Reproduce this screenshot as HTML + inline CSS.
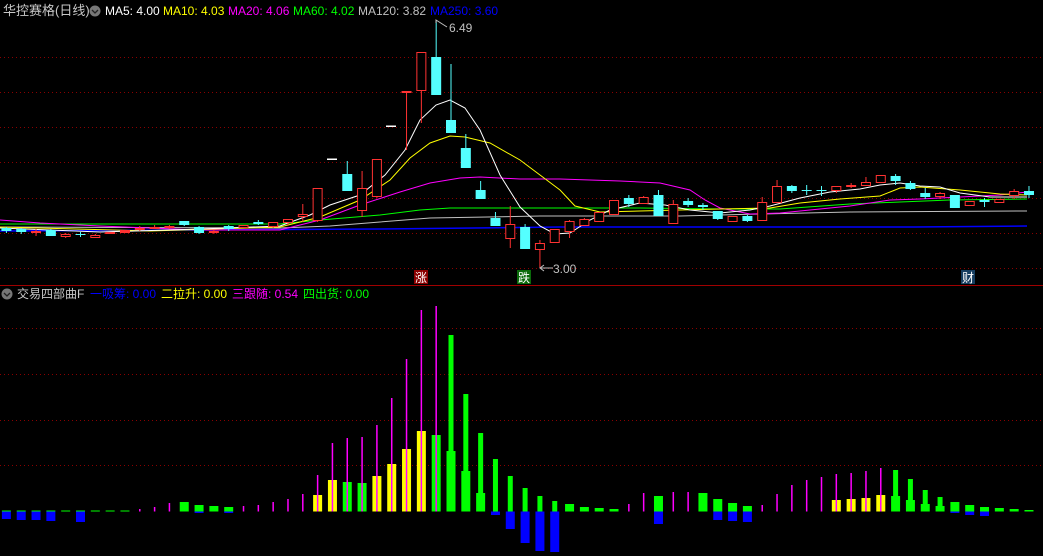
<!DOCTYPE html>
<html><head><meta charset="utf-8"><style>
html,body{margin:0;padding:0;background:#000;width:1043px;height:556px;overflow:hidden;position:relative;font-family:"Liberation Sans","Noto Sans CJK SC",sans-serif;}
.t{position:absolute;font-size:12px;line-height:14px;white-space:nowrap;}
svg{position:absolute;left:0;top:0}
</style></head><body>
<svg width="1043" height="556" viewBox="0 0 1043 556">
<g stroke="#8a0000" stroke-width="1" stroke-dasharray="1,3">
<line x1="0" y1="57.5" x2="1043" y2="57.5"/><line x1="0" y1="92.5" x2="1043" y2="92.5"/><line x1="0" y1="127.5" x2="1043" y2="127.5"/><line x1="0" y1="162.5" x2="1043" y2="162.5"/><line x1="0" y1="198.5" x2="1043" y2="198.5"/><line x1="0" y1="233.5" x2="1043" y2="233.5"/><line x1="0" y1="268.5" x2="1043" y2="268.5"/>
<line x1="0" y1="328.5" x2="1043" y2="328.5"/><line x1="0" y1="374.5" x2="1043" y2="374.5"/><line x1="0" y1="420.5" x2="1043" y2="420.5"/><line x1="0" y1="465.5" x2="1043" y2="465.5"/>
</g>
<line x1="0" y1="285.5" x2="1043" y2="285.5" stroke="#a00000" stroke-width="1"/>
<g fill="none" stroke-width="1">
<polyline stroke="#0000ff" stroke-width="1.5" points="0,231 380,229 560,227 915,227 1027,226"/>
<polyline stroke="#c0c0c0" points="0,227 280,228 330,226 380,222 430,218 540,216 680,216 760,214 850,212 1027,211"/>
<polyline stroke="#00ff00" points="0,224 120,224 280,224 320,220 380,215 420,210 450,208 560,208 640,208 720,209 780,209 850,204 900,202 950,200 1027,199"/>
<polyline stroke="#ff00ff" points="0,220 40,223 100,226 200,230 280,230 320,220 360,205 400,192 430,183 460,178 480,177 520,179 560,179 620,181 660,183 690,190 705,200 720,208 750,214 780,213 810,210 850,206 890,200 920,199 960,197 1000,195 1027,192"/>
<polyline stroke="#ffff00" points="0,227 150,231 280,227 320,217 360,200 390,180 410,158 430,143 450,136 465,137 490,143 520,160 540,175 560,190 575,206 600,212 640,211 680,210 720,209 770,208 800,203 840,199 880,196 900,188 920,187 960,190 1000,194 1027,195"/>
<polyline stroke="#ffffff" points="0,228 100,232 200,229 280,226 310,215 330,205 360,195 385,175 405,150 420,120 436,105 450,100 465,108 480,130 500,175 520,207 540,226 555,234 570,233 590,220 610,210 640,203 665,205 690,210 720,213 750,210 770,206 800,198 830,192 860,189 880,185 900,183 920,186 940,187 960,193 990,197 1027,197"/>
</g>
<g id="c" stroke-width="1"></g>
<g id="b"></g>
<g fill="#fff"><rect x="327" y="158.5" width="10" height="1.5"/><rect x="386" y="125.5" width="10" height="1.5"/></g>
<g stroke="#c0c0c0" fill="none"><polyline points="436,23 436,20 447,27"/><polyline points="540,268 553,268"/><polyline points="544,265 540,268 544,271"/></g>
<text x="449" y="32" fill="#c0c0c0" font-size="12" font-family="Liberation Sans">6.49</text>
<text x="553" y="273" fill="#c0c0c0" font-size="12" font-family="Liberation Sans">3.00</text>
<rect x="414" y="270" width="14" height="14" fill="#8a0000"/><text x="415" y="282" fill="#fff" font-size="12" font-family="Noto Sans CJK SC">涨</text>
<rect x="517" y="270" width="14" height="14" fill="#0a6a0a"/><text x="518" y="282" fill="#fff" font-size="12" font-family="Noto Sans CJK SC">跌</text>
<rect x="961" y="270" width="14" height="14" fill="#163e60"/><text x="962" y="282" fill="#fff" font-size="12" font-family="Noto Sans CJK SC">财</text>
<circle cx="95" cy="11" r="5.5" fill="#777"/><polyline points="92,10 95,13 98,10" stroke="#222" fill="none" stroke-width="1.3"/>
<circle cx="7" cy="294" r="5.5" fill="#777"/><polyline points="4,293 7,296 10,293" stroke="#222" fill="none" stroke-width="1.3"/>
</svg>
<div class="t" style="left:3px;top:4px;color:#c8c8c8;font-size:13px">华控赛格(日线)</div>
<div class="t" style="left:105px;top:4px;color:#fff">MA5: 4.00</div>
<div class="t" style="left:163px;top:4px;color:#ffff00">MA10: 4.03</div>
<div class="t" style="left:228px;top:4px;color:#ff00ff">MA20: 4.06</div>
<div class="t" style="left:293px;top:4px;color:#00ff00">MA60: 4.02</div>
<div class="t" style="left:358px;top:4px;color:#c0c0c0">MA120: 3.82</div>
<div class="t" style="left:430px;top:4px;color:#0000ff">MA250: 3.60</div>
<div class="t" style="left:17px;top:287px;color:#c8c8c8">交易四部曲F</div>
<div class="t" style="left:90px;top:287px;color:#0000ff">一吸筹: 0.00</div>
<div class="t" style="left:161px;top:287px;color:#ffff00">二拉升: 0.00</div>
<div class="t" style="left:232px;top:287px;color:#ff00ff">三跟随: 0.54</div>
<div class="t" style="left:303px;top:287px;color:#00ff00">四出货: 0.00</div>
<script>
var NS="http://www.w3.org/2000/svg";
function X(i){return 6.4+14.82*i;}
function el(p,t,a){var e=document.createElementNS(NS,t);for(var k in a)e.setAttribute(k,a[k]);p.appendChild(e);return e;}
// candles: [i, color r/c, bodyTop, bodyBot, wickTop, wickBot, filled]
var C=[[0,'c',228,231,227,233],[1,'c',229,232,228,234],[2,'r',231,233,229,236],[3,'c',230,236,229,236],[4,'r',234,237,233,238],[5,'c',234,235,232,237],[6,'r',235,238,234,238],[7,'r',232,234,232,234],[8,'r',230,233,230,233,1],[9,'r',228,230,226,231],[10,'r',227,229,225,229],[11,'r',226,228,225,229],[12,'c',221,225,221,226],[13,'c',227,233,226,234],[14,'r',231,233,230,234],[15,'c',226,229,225,231],[16,'r',225,228,225,228],[17,'c',222,224,220,225],[18,'r',222,227,222,228],[19,'r',219,223,219,225],[20,'r',214,217,204,222],[21,'r',188,221,188,222],[23,'c',174,191,161,191],[24,'r',188,211,171,217],[25,'r',159,197,159,198],[27,'r',91,93,91,150],[28,'r',52,91,52,123],[29,'c',57,95,21,95],[30,'c',120,133,64,133],[31,'c',148,168,134,168],[32,'c',190,199,181,199],[33,'c',218,226,212,226],[34,'r',224,239,206,248],[35,'c',227,249,224,249],[36,'r',243,250,240,268],[37,'r',229,243,229,243],[38,'r',221,232,220,238],[39,'r',219,226,218,226],[40,'r',212,222,212,222],[41,'r',200,215,200,215],[42,'c',198,204,195,207],[43,'r',197,204,196,204],[44,'c',195,216,190,216],[45,'r',204,224,200,224],[46,'c',201,205,198,207],[47,'c',205,207,203,210],[48,'c',211,219,211,220],[49,'r',216,222,216,222],[50,'c',216,221,215,222],[51,'r',202,221,197,221],[52,'r',186,203,180,203],[53,'c',186,191,185,193],[54,'c',190,190.5,185,195],[55,'c',190,190.5,186,196],[56,'r',186,191,186,193],[57,'r',185,185.5,183,188],[58,'r',182,186,177,186],[59,'r',175,183,175,183],[60,'c',176,181,174,185],[61,'c',183,189,181,190],[62,'c',193,197,188,199],[63,'r',193,197,192,199],[64,'c',195,208,195,208],[65,'r',201,206,201,206],[66,'c',200,202,198,207],[67,'r',199,203,199,203],[68,'r',191,196,189,199],[69,'c',191,195,186,198]];
var g=document.getElementById('c');
C.forEach(function(d){var x=X(d[0]),col=d[1]=='r'?'#ff3232':'#54ffff';
el(g,'line',{x1:x,x2:x,y1:d[4],y2:d[5],stroke:col});
var h=Math.max(d[3]-d[2],1);
if(d[1]=='c'||d[6])el(g,'rect',{x:x-5,y:d[2],width:10,height:h,fill:col});
else el(g,'rect',{x:x-4.5,y:d[2]+0.5,width:9,height:Math.max(h-1,1),fill:'#000',stroke:col});});
// indicator: [i, type, top] types: B blue(bottom y), G green wide, g thin green, Y yellow, M magenta
var B=511.5,b=document.getElementById('b');
var I=[[0,'B',519],[0,'G',510.5],[1,'B',520],[1,'G',510.5],[2,'B',520],[2,'G',510.5],[3,'B',521],[3,'G',510.5],[4,'G',510.5],[5,'B',522],[5,'G',510.5],[6,'G',510.5],[7,'G',510.5],[8,'G',510.5],[9,'M',509],[10,'M',507],[11,'M',503],[12,'G',502],[13,'G',505],[13,'B',513],[14,'G',506],[15,'G',507],[15,'B',513],[16,'M',506],[17,'M',505],[18,'M',502],[19,'M',499],[20,'M',494],[21,'Y',495],[21,'M',475],[22,'Y',480],[22,'M',443],[23,'G',482],[23,'M',438],[24,'G',483],[24,'M',437],[25,'Y',476],[25,'M',425],[26,'Y',464],[26,'M',398],[27,'Y',449],[27,'M',359],[28,'Y',431],[28,'M',310],[29,'G',435],[29,'M',306],[30,'g',335],[30,'G',451],[31,'g',394],[31,'G',471],[32,'g',433],[32,'G',493],[33,'g',459],[33,'B',515],[34,'g',476],[34,'B',529],[35,'g',488],[35,'B',543],[36,'g',496],[36,'B',551],[37,'g',501],[37,'B',552],[38,'G',504],[39,'G',507],[40,'G',508],[41,'G',509],[42,'M',504],[43,'M',493],[44,'G',496],[44,'B',524],[45,'M',492],[46,'M',492],[47,'G',493],[48,'G',499],[48,'B',520],[49,'G',503],[49,'B',521],[50,'G',506],[50,'B',522],[51,'M',505],[52,'M',494],[53,'M',485],[54,'M',480],[55,'M',477],[56,'Y',500],[56,'M',474],[57,'Y',499],[57,'M',473],[58,'Y',498],[58,'M',471],[59,'Y',495],[59,'M',468],[60,'g',470],[60,'G',496],[61,'g',479],[61,'G',500],[62,'g',490],[62,'G',504],[63,'g',497],[63,'G',506],[64,'G',502],[64,'B',513],[65,'G',505],[65,'B',515],[66,'G',507],[66,'B',516],[67,'G',508],[68,'G',509],[69,'G',510]];
I.forEach(function(d){var x=X(d[0]),t=d[1],y=d[2];
if(t=='B')el(b,'rect',{x:x-4.5,y:B,width:9,height:y-B,fill:'#0000ff'});
else if(t=='G')el(b,'rect',{x:x-4.5,y:y,width:9,height:B-y,fill:'#00ff00'});
else if(t=='g')el(b,'rect',{x:x-2.5,y:y,width:5,height:B-y,fill:'#00ff00'});
else if(t=='Y')el(b,'rect',{x:x-4.5,y:y,width:9,height:B-y,fill:'#ffff00'});
else if(t=='M')el(b,'rect',{x:x-0.75,y:y,width:1.5,height:B-y,fill:'#ff00ff'});});
</script>
</body></html>
